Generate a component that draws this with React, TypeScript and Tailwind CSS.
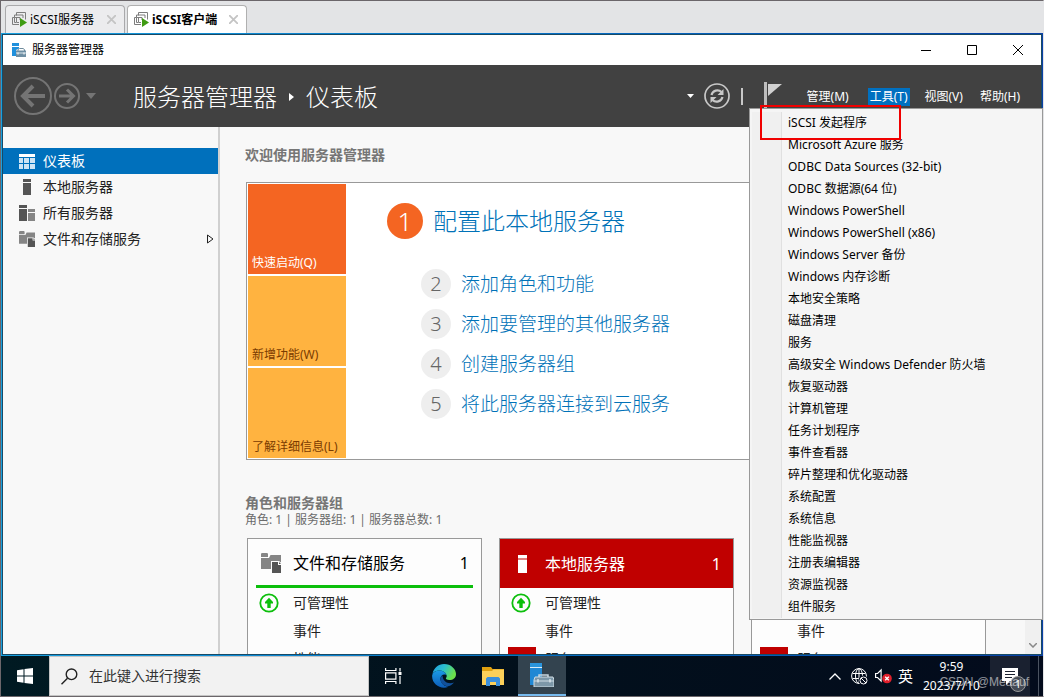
import React from "react";

const menuItems = [
  "iSCSI 发起程序",
  "Microsoft Azure 服务",
  "ODBC Data Sources (32-bit)",
  "ODBC 数据源(64 位)",
  "Windows PowerShell",
  "Windows PowerShell (x86)",
  "Windows Server 备份",
  "Windows 内存诊断",
  "本地安全策略",
  "磁盘清理",
  "服务",
  "高级安全 Windows Defender 防火墙",
  "恢复驱动器",
  "计算机管理",
  "任务计划程序",
  "事件查看器",
  "碎片整理和优化驱动器",
  "系统配置",
  "系统信息",
  "性能监视器",
  "注册表编辑器",
  "资源监视器",
  "组件服务",
];

function ConsoleIcon() {
  return (
    <svg width="15" height="15" viewBox="0 0 15 15" fill="none" className="shrink-0">
      <path d="M4.500 3.500V.5h9v7M2.500 5.500V3h8.500v3M7 12.500H.5V5.500h2M4 10.500H2.500V5.500H8V8M4.500 6v4.500H7" stroke="#7d7d7d" />
      <path d="M8 6l7 4.500L8 15z" fill="#3f9b12" />
    </svg>
  );
}

function ServerManagerIcon({ className }: { className: string }) {
  return (
    <svg viewBox="0 0 24 24" className={className}>
      <path d="M0 0h12v4H0z" fill="#2a95dd" />
      <path d="M0 5h12v17H0z" fill="#2088d4" />
      <path d="M0 4.500h12" stroke="#d8ecf8" strokeWidth="1" />
      <path d="M9 14v-2h9v2" fill="none" stroke="#c7d6df" strokeWidth="1.500" />
      <path d="M5 14h18l1 3v7H4v-7z" fill="#7c97a8" stroke="#cfdce4" strokeWidth="1" />
      <path d="M4 18h20" stroke="#cfdce4" strokeWidth="1" />
      <path d="M8 16v3.500M20 16v3.500" stroke="#e6eef3" strokeWidth="1.200" />
    </svg>
  );
}

function ServerManagerSmallIcon() {
  return (
    <svg width="14" height="14" viewBox="0 0 14 14">
      <path d="M0 0h7v3H0zM0 4h7v1.500L4 7v6H0z" fill="#2090dc" />
      <path d="M6 8V6.500L7.500 5.500h3.500L12.500 6.500V8" fill="none" stroke="#6f8b9c" />
      <path d="M4 7.500h10V14H4z" fill="#6f8fa3" />
      <path d="M4 10h10" stroke="#dbe6ec" />
      <path d="M6 9.500v2M12 9.500v2" stroke="#fff" />
    </svg>
  );
}

function DashboardIcon() {
  return (
    <svg width="16" height="15" viewBox="0 0 16 15" fill="#cfe5f4">
      <path d="M0 0h16v3H0z" fill="#fff" />
      <path d="M0 4h4v5H0zM5 4h5v5H5zM11 4h5v5h-5zM0 10h4v5H0zM5 10h5v5H5zM11 10h5v5h-5z" />
    </svg>
  );
}

function ServerIcon({ className }: { className: string }) {
  return (
    <svg viewBox="0 0 8 16" className={className} fill="currentColor">
      <path d="M0 0h8v3H0zM0 4h8v12H0z" />
    </svg>
  );
}

function ServersIcon() {
  return (
    <svg width="16" height="16" viewBox="0 0 16 16">
      <path d="M0 0h8v3H0zM0 4h8v12H0z" fill="#555" />
      <path d="M9 4h7v3H9zM9 8h7v8H9z" fill="#858585" />
    </svg>
  );
}

function StorageIcon({ className }: { className: string }) {
  return (
    <svg viewBox="0 0 20 20" className={className}>
      <path d="M0 .8L.8 0h5.400l.8.800V4H0z" fill="#858585" />
      <path d="M0 5h8l1.500-3H20v7.500L18 8h-8v8H0z" fill="#858585" />
      <path d="M11 9h6v3h3v8h-9z" fill="#555" />
      <path d="M18 9l2 2h-2z" fill="#555" />
    </svg>
  );
}

function UpIcon() {
  return (
    <svg width="20" height="20" viewBox="0 0 20 20" fill="none">
      <circle cx="10" cy="10" r="8.700" stroke="#0cbf0c" strokeWidth="1.800" />
      <path d="M10 4.800l4 4.200v1.500h-2.300V15H8.300v-4.500H6V9z" fill="#0cbf0c" />
    </svg>
  );
}

function Tab({ label, active }: { label: string; active?: boolean }) {
  return (
    <div
      className={
        active
          ? "flex h-7 w-[120px] items-center rounded-t border border-b-0 border-[#b0b0b0] bg-white pl-1.5 pr-1 font-bold"
          : "flex h-7 w-[120px] items-center rounded-t border border-b-0 border-[#a9a9ab] bg-[#ececee] pl-1.5 pr-1"
      }
    >
      <ConsoleIcon />
      <button className="flex-1 whitespace-nowrap pl-[3px] pt-px text-left text-xs">{label}</button>
      <button aria-label="关闭标签" className="p-1">
        <svg width="9" height="9" viewBox="0 0 9 9" stroke="#c4c4c4" strokeWidth="1.800">
          <path d="M0 0l9 9M9 0L0 9" />
        </svg>
      </button>
    </div>
  );
}

function Card({ title, alert }: { title: string; alert?: boolean }) {
  return (
    <section className="h-[180px] w-[235px] shrink-0 border border-[#999] bg-[#fdfdfd]">
      <header className={alert ? "flex h-[49px] items-center bg-[#c00000] text-white" : "mx-2 flex h-[49px] items-center border-b-[3px] border-[#0cbf0c] pt-0.5 text-black"}>
        <span className={alert ? "flex w-[45px] justify-center" : "flex w-[37px] pl-[5px]"}>
          {alert ? <ServerIcon className="h-[18px] w-[9px]" /> : <StorageIcon className="h-5 w-5" />}
        </span>
        <h3 className="flex-1 text-base">{title}</h3>
        <span className={alert ? "pr-3 text-base" : "pr-1 text-base"}>1</span>
      </header>
      <ul className="pt-px text-sm text-[#222]">
        <li className="flex h-7 items-center">
          <span className="w-[45px] pl-[11px]"><UpIcon /></span>可管理性
        </li>
        <li className="flex h-7 items-center pl-[45px]">事件</li>
        <li className="flex h-7 items-center">
          <span className="w-[45px] pl-2">
            {alert && <span className="flex h-6 w-7 items-center justify-center bg-[#c00000] text-white">1</span>}
          </span>
          {alert ? "服务" : "性能"}
        </li>
      </ul>
    </section>
  );
}

function Step({ n, label }: { n: number; label: string }) {
  return (
    <li className="flex h-10 items-center gap-2.5">
      <span className="flex size-[30px] items-center justify-center rounded-full bg-[#eee] text-xl font-light text-[#666]">{n}</span>
      <a href="#" className="text-[19px] font-light text-[#0072b8]">{label}</a>
    </li>
  );
}

function ToolsMenu() {
  return (
    <div className="absolute top-[43px] right-0 z-10 -mr-0.5 w-[294px] border border-[#999] bg-[#f5f5f5] px-0.5 pt-[3px] pb-px text-xs text-black">
      <ul className="border-l-[29px] border-[#f0f0f0]">
        {menuItems.map((m) => (
          <li key={m} className="border-l border-[#e0e0e0]">
            <button className="block h-[22px] w-full whitespace-nowrap pl-1.5 text-left">{m}</button>
          </li>
        ))}
      </ul>
      <div className="absolute -top-1 left-2.5 h-[35px] w-[141px] border-2 border-[#f00000]" />
    </div>
  );
}

function Header() {
  return (
    <header className="relative flex h-[62px] shrink-0 items-center bg-[#414141] text-white">
      <div className="flex items-center pl-[11px] text-[#747474]">
        <button aria-label="后退">
          <svg width="38" height="38" viewBox="0 0 38 38" fill="none" stroke="currentColor">
            <circle cx="19" cy="19" r="18" strokeWidth="2" />
            <path d="M31 19H9" strokeWidth="4" />
            <path d="M19 9L9 19l10 10" strokeWidth="4" />
          </svg>
        </button>
        <button aria-label="前进" className="ml-0.5">
          <svg width="26" height="26" viewBox="0 0 26 26" fill="none" stroke="currentColor">
            <circle cx="13" cy="13" r="12" strokeWidth="2" />
            <path d="M5 13h14M13 6.500l6.500 6.500-6.500 6.500" strokeWidth="3" />
          </svg>
        </button>
        <svg width="10" height="6" viewBox="0 0 10 6" fill="currentColor" className="ml-1.5"><path d="M0 0h10L5 6z" /></svg>
      </div>
      <h1 className="flex flex-1 items-center gap-3 pt-0.5 pl-[37px] text-2xl font-light whitespace-nowrap">
        服务器管理器
        <svg width="5" height="8" viewBox="0 0 5 8" fill="#fff"><path d="M0 0l5 4-5 4z" /></svg>
        仪表板
      </h1>
      <div className="flex items-center pr-[19px]">
        <svg width="7" height="4" viewBox="0 0 7 4" fill="#fff"><path d="M0 0h7L3.500 4z" /></svg>
        <button aria-label="刷新" className="ml-2.5">
          <svg width="26" height="26" viewBox="0 0 26 26" fill="none" stroke="#c8c8c8">
            <circle cx="13" cy="13" r="12" strokeWidth="1.700" />
            <path d="M7.500 12a6 6 0 0 1 10-3M18.500 14a6 6 0 0 1-10 3" strokeWidth="2.200" />
            <path d="M19.500 6v6h-6zM6.500 20v-6h6z" fill="#c8c8c8" stroke="none" />
          </svg>
        </button>
        <span className="ml-[11px] h-[17px] w-0.5 bg-[#c8c8c8]" />
        <button aria-label="通知" className="ml-[21px]">
          <svg width="18" height="28" viewBox="0 0 18 28"><path d="M0 0h3v28H0z" fill="#bdbdbd" /><path d="M4 2h14L4 14z" fill="#d0d0d0" /></svg>
        </button>
        <nav className="ml-[23px] flex gap-[13px] pt-0.5 text-xs whitespace-nowrap">
          <button className="h-[18px] px-0.5">管理(M)</button>
          <button className="ml-1 h-[18px] bg-[#0070c0] px-0.5">工具(T)</button>
          <button className="h-[18px] px-0.5">视图(V)</button>
          <button className="h-[18px] px-0.5">帮助(H)</button>
        </nav>
      </div>
      <ToolsMenu />
    </header>
  );
}

function Sidebar() {
  return (
    <nav className="w-[217px] shrink-0 border-r-2 border-[#d0d0d0] pt-[21px] text-sm text-[#222]">
      <button className="flex h-[26px] w-full items-center bg-[#0070bc] text-white">
        <span className="flex w-10 justify-start pl-4"><DashboardIcon /></span>仪表板
      </button>
      <button className="flex h-[26px] w-full items-center">
        <span className="flex w-10 pl-5 text-[#555]"><ServerIcon className="h-4 w-2" /></span>本地服务器
      </button>
      <button className="flex h-[26px] w-full items-center">
        <span className="flex w-10 pl-4"><ServersIcon /></span>所有服务器
      </button>
      <button className="flex h-[26px] w-full items-center">
        <span className="flex w-10 pl-4"><StorageIcon className="size-4" /></span>
        <span className="flex-1 text-left">文件和存储服务</span>
        <svg width="7" height="10" viewBox="0 0 7 10" fill="none" stroke="#222" className="mr-1"><path d="M.5 1l5.500 4L.5 9z" /></svg>
      </button>
    </nav>
  );
}

function Dashboard() {
  return (
    <main className="min-w-0 flex-1 overflow-hidden pl-[25px]">
      <h2 className="pt-[18px] text-sm leading-5 font-bold text-[#767676]">欢迎使用服务器管理器</h2>
      <section className="mt-[17px] ml-px flex h-[278px] border border-[#999] bg-white">
        <div className="flex w-[99px] flex-col gap-0.5 py-px pl-px text-xs">
          <button className="flex flex-1 items-end bg-[#f46522] px-1 pb-[3px] text-left text-white">快速启动(Q)</button>
          <button className="flex flex-1 items-end bg-[#ffb340] px-1 pb-[3px] text-left text-[#7a3b00]">新增功能(W)</button>
          <button className="flex flex-1 items-end bg-[#ffb340] px-1 pb-[3px] text-left text-[#7a3b00]">了解详细信息(L)</button>
        </div>
        <div className="pt-5 pl-[41px]">
          <div className="flex items-center gap-2.5">
            <span className="flex size-9 items-center justify-center rounded-full bg-[#f46522] text-[26px] font-light text-white">1</span>
            <a href="#" className="text-2xl font-light text-[#0072b8]">配置此本地服务器</a>
          </div>
          <ol className="pt-[25px] pl-[34px]">
            <Step n={2} label="添加角色和功能" />
            <Step n={3} label="添加要管理的其他服务器" />
            <Step n={4} label="创建服务器组" />
            <Step n={5} label="将此服务器连接到云服务" />
          </ol>
        </div>
      </section>
      <h2 className="mt-[34px] text-sm leading-[18px] font-bold text-[#767676]">角色和服务器组</h2>
      <p className="text-xs text-[#6b6b6b]">角色: 1 | 服务器组: 1 | 服务器总数: 1</p>
      <div className="mt-2.5 ml-0.5 flex gap-[17px]">
        <Card title="文件和存储服务" />
        <Card title="本地服务器" alert />
        <Card title="所有服务器" alert />
      </div>
    </main>
  );
}

function Taskbar() {
  return (
    <footer className="relative flex h-10 shrink-0 items-center bg-linear-to-r from-[#001a22] via-[#02101c] to-[#030b1c] text-white">
      <button aria-label="开始" className="flex h-full w-12 items-center justify-center">
        <svg width="16" height="16" viewBox="0 0 16 16" fill="#fff"><path d="M0 2.300L6.500 1.300v6.200H0zM7.500 1.100L16 0v7.500H7.500zM0 8.500h6.500v6.200L0 13.700zM7.500 8.500H16V16l-8.500-1.100z" /></svg>
      </button>
      <label className="flex h-full w-80 items-center border border-[#c4c4c4] bg-[#f2f2f2] pl-[11px] text-[#222]">
        <svg width="17" height="17" viewBox="0 0 17 17" fill="none" stroke="#222" strokeWidth="1.400"><circle cx="10.500" cy="6.300" r="5.300" /><path d="M6.500 10.200L.5 16.300" /></svg>
        <input aria-label="搜索" placeholder="在此键入进行搜索" className="ml-[11px] min-w-0 flex-1 bg-transparent text-sm outline-none placeholder:text-[#333]" />
      </label>
      <button aria-label="任务视图" className="flex h-full w-12 items-center justify-center">
        <svg width="17" height="16" viewBox="0 0 17 16" fill="none" stroke="#fff" strokeWidth="1.200"><path d="M.6 0v2.500h10.300V0M.6 16v-2.500h10.300V16M.6 4.800h10.300v6.400H.6zM15 0v3.500M15 8v8" /><path d="M13.500 4h3v3h-3z" fill="#fff" stroke="none" /></svg>
      </button>
      <button aria-label="Edge" className="flex h-full w-[54px] items-center justify-center">
        <svg width="24" height="24" viewBox="0 0 24 24">
          <defs>
            <linearGradient id="ea" x1="0" y1="0" x2="1" y2=".4"><stop offset="0" stopColor="#1f9be0" /><stop offset=".5" stopColor="#2bbfd0" /><stop offset="1" stopColor="#6be04a" /></linearGradient>
            <linearGradient id="eb" x1="0" y1="0" x2="0" y2="1"><stop offset="0" stopColor="#1a9be6" /><stop offset="1" stopColor="#0d5cb8" /></linearGradient>
          </defs>
          <path d="M.5 10C1.500 4 6.500 0 12 0c7 0 12 5 12 10 0 4-3 6-6.500 6-3 0-4-1.200-3.500-2 .8-1 .9-2 .5-3-.9-3-4-4.500-7-4.500C4 6.500 1.500 8 .5 10z" fill="url(#ea)" />
          <path d="M.2 11C1 8 4 6.500 7.500 6.500c3 0 6 1.500 7 4.500-3.500-1.500-6.500 1-6 4.500.5 4 4 7 8 7.200C9 26-.8 20.500.2 11z" fill="url(#eb)" />
          <path d="M10.500 11.500c-3 2-2.500 6 0 8.500 3.500 3.500 8.500 2.500 11.500-1.500-5 2-11 0-11.500-7z" fill="#11509b" />
        </svg>
      </button>
      <button aria-label="文件资源管理器" className="flex h-full w-[47px] items-center justify-center pr-1">
        <svg width="22" height="19" viewBox="0 0 22 19"><path d="M0 0h9l1.500 2H22v4H0z" fill="#e0a010" /><path d="M0 4h10l1.500-1.500H22V18H0z" fill="#fcd05a" /><path d="M4 19v-7.500L5.500 10h11l1.500 1.500V19h-4v-4H8v4z" fill="#3a8fdc" /></svg>
      </button>
      <button aria-label="服务器管理器" className="flex h-full w-12 items-center justify-center border-b-2 border-[#76b9ed] bg-[#33434f]">
        <ServerManagerIcon className="size-6" />
      </button>
      <div className="ml-auto flex h-full items-center">
        <svg width="12" height="7" viewBox="0 0 12 7" fill="none" stroke="#fff" strokeWidth="1.300"><path d="M.5 6.500L6 1l5.500 5.500" /></svg>
        <svg width="17" height="17" viewBox="0 0 17 17" fill="none" stroke="#fff" className="ml-2.5">
          <circle cx="8" cy="8" r="7.400" /><ellipse cx="8" cy="8" rx="3.500" ry="7.400" /><path d="M1.500 5.500h13M1.500 10.500h8M8 .5v15" />
          <circle cx="12.500" cy="12.500" r="5" fill="#030b1c" stroke="none" /><circle cx="12.500" cy="12.500" r="3.500" /><path d="M10 10l5 5" />
        </svg>
        <svg width="17" height="16" viewBox="0 0 17 16" fill="none" className="ml-[7px]">
          <path d="M.6 5.500h2l3.500-3.500v11L2.600 9.500h-2z" stroke="#fff" strokeWidth="1.200" />
          <circle cx="12" cy="10.500" r="4.800" fill="#e0202c" /><path d="M10.200 8.700l3.600 3.600M13.800 8.700l-3.600 3.600" stroke="#fff" strokeWidth="1.300" />
        </svg>
        <span className="ml-1.5 text-[15px]">英</span>
        <div className="w-[77px] text-center text-xs leading-[19px]">
          <div>9:59</div>
          <div>2023/7/10</div>
        </div>
        <button aria-label="通知中心" className="relative flex h-full w-10 items-center justify-center bg-[#1a2130]">
          <svg width="16" height="17" viewBox="0 0 16 17"><path d="M0 0h16v13H8l-4 4v-4H0z" fill="#fff" /><path d="M3 3.500h10M3 6.500h10M3 9.500h7" stroke="#1a2130" /></svg>
          <span className="absolute right-1 bottom-1 flex size-4 items-center justify-center rounded-full border border-[#999] bg-[#444a55] text-[10px]">1</span>
        </button>
        <span className="mr-1 ml-2 h-full w-px bg-[#4a5260]" />
      </div>
      <span className="absolute right-3.5 bottom-1.5 font-['Liberation_Sans'] text-xs text-white/55">CSDN @Meaauf</span>
    </footer>
  );
}

export default function App() {
  return (
    <div className="flex h-screen flex-col overflow-hidden border border-[#6b666a] border-r-[#e3e4e6] bg-[#e3e4e6] font-['Noto_Sans','Noto_Sans_CJK_SC',sans-serif]">
      <div className="flex h-8 shrink-0 items-end gap-0.5 pl-1">
        <Tab label="iSCSI服务器" />
        <Tab label="iSCSI客户端" active />
      </div>
      <div className="min-h-0 flex-1 bg-linear-to-r from-[#18a0e0] to-[#0a40a8] p-px">
        <div className="flex h-full flex-col border border-[#174a66] bg-[#f8f8f8]">
          <div className="flex h-[30px] shrink-0 items-center bg-white pl-[9px] text-xs text-black">
            <ServerManagerSmallIcon />
            <span className="flex-1 pl-1.5">服务器管理器</span>
            <button aria-label="最小化" className="flex w-[46px] justify-center"><svg width="10" height="10" stroke="#000"><path d="M0 5.500h10" /></svg></button>
            <button aria-label="最大化" className="flex w-[46px] justify-center"><svg width="10" height="10" fill="none" stroke="#000"><path d="M.5.5h9v9h-9z" /></svg></button>
            <button aria-label="关闭" className="flex w-[46px] justify-center"><svg width="10" height="10" stroke="#000"><path d="M0 0l10 10M10 0L0 10" /></svg></button>
          </div>
          <Header />
          <div className="flex min-h-0 flex-1 overflow-hidden">
            <Sidebar />
            <Dashboard />
            <div className="flex w-4 shrink-0 items-end justify-center bg-[#f0f0f0] pb-1.5">
              <svg width="8" height="5" fill="none" stroke="#888" strokeWidth="1.500"><path d="M0 0l4 4 4-4" /></svg>
            </div>
          </div>
        </div>
      </div>
      <Taskbar />
    </div>
  );
}
